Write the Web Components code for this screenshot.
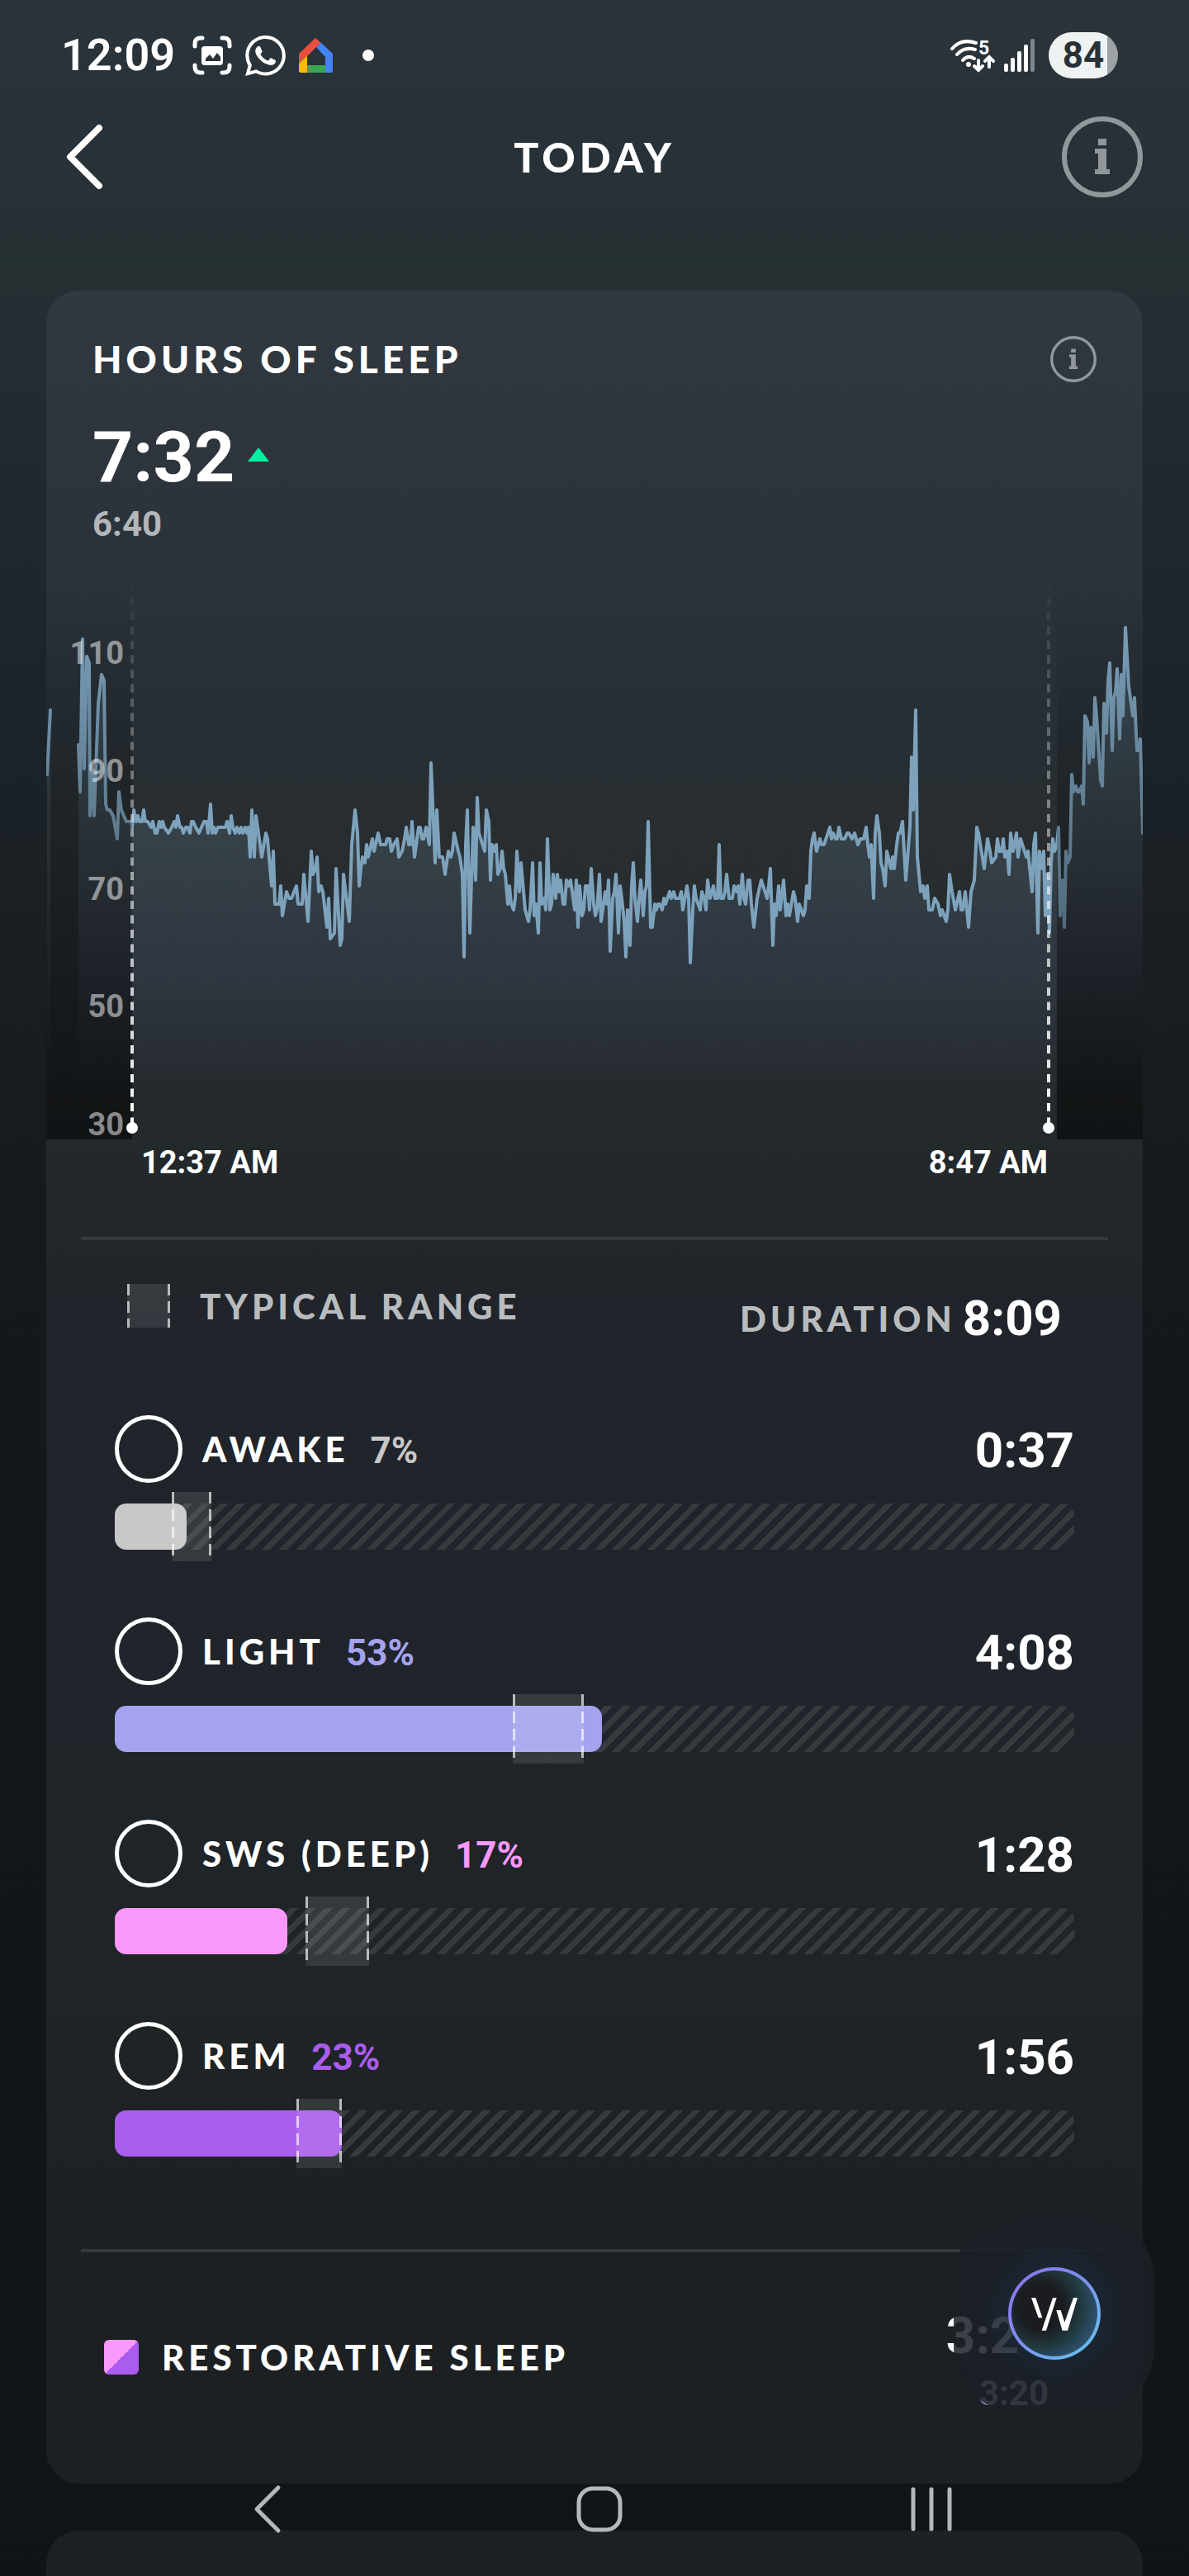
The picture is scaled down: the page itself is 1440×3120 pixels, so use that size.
<!DOCTYPE html>
<html lang="en">
<head>
<meta charset="utf-8">
<meta name="viewport" content="width=device-width, initial-scale=1">
<title>Hours of sleep</title>
<style>
	:root {
		--text-font: Lato, "Open Sans", sans-serif;
		--number-font: Roboto, "Liberation Sans", sans-serif;
		--white: #ffffff;
		--muted: #b9bcbf;
		--rule: #34393d;
		--light: #a5a3ef;
		--deep: #fb98fb;
		--rem: #aa5cec;
	}
	body {
		margin: 0;
		min-height: 100vh;
		display: flex;
		flex-direction: column;
		color: var(--white);
		font-family: var(--text-font);
		background: linear-gradient(#2b343b 0%, #283137 6%, #253033 10%, #212a30 17%, #1b242b 27%, #1a1f22 36%, #15191c 48%, #13171a 65%, #101416 100%);
	}
</style>
</head>
<body>
	<status-bar></status-bar>
	<page-header>TODAY</page-header>
	<sleep-card>
		<span slot="title">HOURS OF SLEEP</span>
		<span slot="value">7:32</span>
		<span slot="typical">6:40</span>
		<heart-chart></heart-chart>
		<chart-times start="12:37 AM" end="8:47 AM"></chart-times>
		<card-rule></card-rule>
		<stage-legend duration="8:09"></stage-legend>
		<stage-list>
			<sleep-stage name="AWAKE" percent="7%" time="0:37" fill="7.5" from="5.9" span="4.2" style="--stage: #c8c8c8"></sleep-stage>
			<sleep-stage name="LIGHT" percent="53%" time="4:08" fill="50.8" from="41.5" span="7.4" style="--stage: var(--light)"></sleep-stage>
			<sleep-stage name="SWS (DEEP)" percent="17%" time="1:28" fill="18" from="19.9" span="6.6" style="--stage: var(--deep)"></sleep-stage>
			<sleep-stage name="REM" percent="23%" time="1:56" fill="23.7" from="18.9" span="4.8" style="--stage: var(--rem)"></sleep-stage>
		</stage-list>
		<card-rule></card-rule>
		<restorative-row value="3:24" typical="3:20">RESTORATIVE SLEEP</restorative-row>
	</sleep-card>
	<next-card></next-card>
	<coach-button></coach-button>
	<system-nav></system-nav>

<script>
// every element only has to fill its own shadow root
class BaseElement extends HTMLElement {
	constructor () {
		super();
		this._shadowRoot = this.attachShadow({ mode: 'open' });
	}

	connectedCallback () {
		this._shadowRoot.innerHTML = this.render();
	}

	attr (name) {
		return this.getAttribute(name);
	}
}

class StatusBar extends BaseElement {
	render () {
		return `
			<style>
				:host {
					display: flex;
					align-items: center;
					justify-content: space-between;
					box-sizing: border-box;
					height: 134px;
					padding: 0 86px 0 74px;
					font-family: var(--number-font);
				}
				div {
					display: flex;
					align-items: center;
				}
				svg {
					display: block;
				}
				.time {
					font-size: 54px;
					font-weight: 600;
					line-height: 56px;
					margin-right: 21px;
				}
				.left svg {
					margin-right: 16px;
				}
				.dot {
					width: 14px;
					height: 14px;
					border-radius: 50%;
					background: var(--white);
					margin-left: 20px;
				}
				.right svg {
					margin-right: 10px;
				}
				.battery {
					justify-content: center;
					width: 84px;
					height: 56px;
					border-radius: 28px;
					margin-left: 6px;
					font-size: 44px;
					font-weight: 700;
					color: #2a3238;
					background: linear-gradient(90deg, #eff2f2 84%, #9da2a5 84%);
				}
			</style>
			<div class="left">
				<span class="time">12:09</span>
				<svg width="48" height="48" fill="none" stroke="#fff" stroke-width="5" stroke-linecap="round">
					<path d="M3 13V10Q3 3 10 3H12M36 3H38Q45 3 45 10V13M45 36V38Q45 45 38 45H36M12 45H10Q3 45 3 38V36"/>
					<rect x="11" y="13" width="26" height="23" rx="4" fill="#fff" stroke="none"/>
					<path d="M16 31V28L21 23L25 28L30 21L34 26V31Z" fill="#2a3238" stroke="none"/>
				</svg>
				<svg width="49" height="49" viewBox="2 2 20 20" fill="#fff">
					<path d="M12.04 2C6.58 2 2.13 6.45 2.13 11.91c0 1.75.46 3.45 1.32 4.95L2.05 22l5.25-1.38c1.45.79 3.08 1.21 4.74 1.21 5.46 0 9.91-4.45 9.91-9.91 0-2.65-1.03-5.14-2.9-7.01A9.816 9.816 0 0 0 12.04 2m.01 1.67c2.2 0 4.26.86 5.82 2.42a8.225 8.225 0 0 1 2.41 5.83c0 4.54-3.7 8.23-8.24 8.23-1.48 0-2.93-.39-4.19-1.15l-.3-.17-3.12.82.83-3.04-.2-.32a8.188 8.188 0 0 1-1.26-4.38c.01-4.54 3.7-8.24 8.25-8.24M8.53 7.33c-.16 0-.43.06-.66.31-.22.25-.87.86-.87 2.07 0 1.22.89 2.39 1 2.56.14.17 1.76 2.67 4.25 3.73.59.27 1.05.42 1.41.53.59.19 1.13.16 1.56.1.48-.07 1.46-.6 1.67-1.18.21-.58.21-1.07.15-1.18-.07-.1-.23-.16-.48-.27-.25-.14-1.47-.74-1.69-.82-.23-.08-.37-.12-.56.12-.16.25-.64.81-.78.97-.15.17-.29.19-.53.07-.26-.13-1.06-.39-2-1.23-.74-.66-1.23-1.47-1.38-1.72-.12-.24-.01-.39.11-.5.11-.11.27-.29.37-.44.13-.14.17-.25.25-.41.08-.17.04-.31-.02-.43-.06-.11-.56-1.35-.77-1.84-.2-.48-.4-.42-.56-.43-.14 0-.3-.01-.47-.01"/>
				</svg>
				<svg width="41" height="42">
					<path d="M20 0L27 6L21 11L10 22V24L0 31V19Z" fill="#ea4e3f"/>
					<path d="M27 6L41 19V40Q41 42 39 42H32V23L21 11Z" fill="#4384f4"/>
					<path d="M0 31L10 22V42H2Q0 42 0 40Z" fill="#fabb08"/>
					<path d="M10 33H32V42H10Z" fill="#37a753"/>
				</svg>
				<span class="dot"></span>
			</div>
			<div class="right">
				<svg width="56" height="42" fill="none" stroke="#fff" stroke-width="4" stroke-linecap="round">
					<path d="M3 13Q14 0 32 6M9 20Q18 10 31 14M16 27Q22 20 30 25"/>
					<circle cx="23" cy="32" r="3" fill="#fff" stroke="none"/>
					<path d="M35 27V38M30 34L35 39L40 34M48 35V24M43 28L48 23L53 28"/>
					<text x="35" y="20" font-size="23" font-weight="700" fill="#fff" stroke="none">5</text>
				</svg>
				<svg width="38" height="42" fill="#fff">
					<rect x="0" y="31" width="5" height="10" rx="2"/>
					<rect x="8" y="24" width="5" height="17" rx="2"/>
					<rect x="16" y="16" width="5" height="25" rx="2"/>
					<rect x="24" y="8" width="5" height="33" rx="2"/>
					<rect x="32" y="1" width="5" height="40" rx="2" fill="#7e868b"/>
				</svg>
				<div class="battery">84</div>
			</div>
		`;
	}
}

class InfoButton extends BaseElement {
	render () {
		return `
			<style>
				:host {
					display: block;
					width: 98px;
					height: 98px;
				}
				:host([small]) {
					width: 56px;
					height: 56px;
				}
				button {
					display: block;
					width: 100%;
					height: 100%;
					padding: 0;
					border: 0;
					background: none;
					cursor: pointer;
				}
				svg {
					display: block;
				}
			</style>
			<button aria-label="Info">
				<svg viewBox="0 0 98 98" width="100%" height="100%">
					<circle cx="49" cy="49" r="46" fill="none" stroke="#91979a" stroke-width="6"/>
					<path d="M44 27h10v8h-10zM40 39h14v25h4v6H40v-6h4V45h-4z" fill="#91979a"/>
				</svg>
			</button>
		`;
	}
}

class PageHeader extends BaseElement {
	render () {
		return `
			<style>
				:host {
					display: grid;
					grid-template-columns: 1fr auto 1fr;
					align-items: center;
					padding: 7px 56px 0;
					margin-bottom: 113px;
				}
				h1 {
					margin: 0;
					font-size: 50px;
					font-weight: 900;
					line-height: 58px;
					letter-spacing: 5px;
				}
				.back {
					justify-self: start;
					width: 72px;
					height: 82px;
					padding: 0 0 0 22px;
					border: 0;
					background: none;
					cursor: pointer;
				}
				svg {
					display: block;
				}
				info-button {
					justify-self: end;
				}
			</style>
			<button class="back" aria-label="Back">
				<svg width="50" height="82" fill="none" stroke="#fff" stroke-width="8" stroke-linecap="round" stroke-linejoin="round">
					<path d="M42 6L7 41L42 76"/>
				</svg>
			</button>
			<h1><slot></slot></h1>
			<info-button></info-button>
		`;
	}
}

class SleepCard extends BaseElement {
	render () {
		return `
			<style>
				:host {
					display: block;
					margin: 0 56px;
					padding: 55px 0 88px;
					border-radius: 40px;
					overflow: hidden;
					background: linear-gradient(#31383f 0%, #2d343b 8%, #2a323a 14%, #272f35 20%, #282d30 25%, #262b2f 34%, #23282b 40%, #212629 44%, #20242b 47%, #1f252a 65%, #1f2426 78%, #1c2023 90%, #1d2023 100%);
				}
				header {
					padding: 0 56px 44px;
				}
				.top {
					display: flex;
					align-items: center;
					justify-content: space-between;
				}
				h2 {
					margin: 0;
					font-size: 46px;
					font-weight: 900;
					line-height: 52px;
					letter-spacing: 5px;
				}
				.value {
					display: flex;
					align-items: center;
					gap: 16px;
					margin-top: 49px;
					font: 700 86px/84px var(--number-font);
				}
				.value svg {
					margin-bottom: 6px;
				}
				.typical {
					margin-top: 18px;
					color: #b4b7ba;
					font: 700 42px/42px var(--number-font);
				}
			</style>
			<header>
				<div class="top">
					<h2><slot name="title"></slot></h2>
					<info-button small></info-button>
				</div>
				<div class="value">
					<slot name="value"></slot>
					<svg width="26" height="18"><path d="M13 0L26 17H0Z" fill="#00f19f"/></svg>
				</div>
				<div class="typical"><slot name="typical"></slot></div>
			</header>
			<slot></slot>
		`;
	}
}

// x,bpm samples, one string for each unbroken part of the line
const HEART_RATE = [
	'1,89 5,100',
	`39,94 41,86 44,112 46,90 49,109 52,108 53,82 56,89 58,82 63,101 67,106 70,105 72,84 74,83 77,83 81,82 86,78 88,86
	91,83 94,82 97,81 103,81 104,80 106,83 109,81 111,82 113,81 116,81 118,83 120,81 123,81 127,80 129,81 132,79 134,79
	137,81 139,80 141,81 143,80 148,79 152,80 155,81 157,80 159,82 162,80 164,80 166,79 169,80 171,80 174,79 176,81 178,81
	181,80 185,79 188,80 191,81 194,81 196,79 199,84 201,79 203,80 205,79 208,80 217,80 219,81 222,79 224,82 226,80 229,79
	231,80 234,79 236,80 238,79 241,80 243,79 245,80 247,75 249,83 252,75 254,82 257,79 261,75 266,79 268,78 273,70 275,76
	277,67 282,67 284,70 286,65 291,69 294,68 297,68 303,70 305,67 310,67 312,72 317,64 321,76 323,72 326,73 328,75 330,69
	333,70 335,69 340,63 342,68 344,61 349,62 351,73 356,60 358,61 360,72 367,64 370,77 374,83 377,79 379,70 381,73 383,75
	386,74 388,77 390,75 395,78 397,76 402,79 405,77 411,77 413,78 416,78 418,76 421,77 425,78 427,75 431,76 434,78 436,80
	439,77 441,77 443,81 446,75 451,80 453,80 455,78 457,78 460,80 464,77 466,91 471,74 473,83 476,75 480,75 483,72 487,76
	490,75 492,76 494,79 499,76 501,75 504,72 506,58 508,77 510,83 513,62 517,80 520,71 522,85 524,79 531,76 533,83 536,81
	538,71 540,77 543,76 545,77 547,72 550,73 552,76 554,73 556,72 559,67 561,70 563,67 566,66 568,68 570,76 573,69 575,74
	580,66 584,64 586,66 589,74 591,65 593,67 596,62 598,74 600,67 603,68 605,66 607,78 610,66 612,67 614,72 617,68 619,72
	621,69 623,71 626,67 628,67 630,71 633,70 635,71 640,66 642,71 644,63 646,70 649,65 651,66 653,70 656,70 658,66 660,73
	663,67 665,65 667,66 670,72 672,64 677,69 679,67 681,71 683,59 686,68 688,69 690,72 693,62 695,70 697,68 700,64 702,58
	704,66 707,60 709,70 711,74 713,68 716,64 718,68 720,71 723,65 725,69 727,70 729,81 732,63 734,63 737,67 739,66 741,67
	743,67 746,66 748,68 750,67 755,69 757,68 760,69 762,68 767,68 769,69 771,66 776,70 778,68 780,57 783,66 785,70 787,68
	792,66 794,69 797,68 799,66 801,71 804,68 808,70 810,68 813,68 815,77 817,68 820,68 822,69 824,72 827,68 831,68 833,70
	836,69 838,70 840,67 843,72 845,68 847,67 850,71 852,71 854,67 857,63 861,68 866,71 873,68 875,70 877,73 880,60 882,67
	884,65 887,70 889,66 893,71 896,65 898,67 900,65 905,69 907,68 910,64 912,67 917,65 919,66 921,70 924,68 926,76 928,78
	930,79 933,76 937,78 939,77 942,77 949,80 951,78 953,79 956,78 958,78 960,80 963,78 967,78 970,79 972,79 976,78 979,79
	983,77 986,78 990,78 993,80 995,77 997,75 999,77 1002,68 1004,79 1006,82 1009,79 1011,74 1013,73 1016,70 1018,76
	1023,73 1025,75 1027,73 1030,77 1032,79 1034,79 1037,81 1041,71 1046,80 1048,92 1050,83 1053,100 1055,75 1059,69
	1062,70 1064,68 1067,70 1069,66 1073,66 1076,68 1080,67 1083,65 1085,66 1090,64 1092,66 1094,72 1097,69 1101,66
	1106,69 1108,66 1110,66 1113,69 1117,63 1120,69 1124,71 1127,80 1129,79 1136,73 1140,78 1143,76 1145,74 1150,75
	1152,78 1154,76 1157,76 1159,78 1161,75 1164,76 1166,72 1168,79 1171,76 1175,79 1177,75 1180,78 1187,75 1189,76
	1194,69 1196,77 1198,79 1201,62 1203,76 1205,73 1208,76 1210,65 1212,72 1215,62 1217,74 1219,78 1221,76 1224,77
	1226,80 1228,65 1231,71 1233,63 1235,76 1237,74 1240,75 1242,89 1244,86 1247,87 1249,86 1251,86 1254,87 1256,84
	1258,99 1261,98 1263,91 1265,97 1268,92 1270,102 1272,99 1277,88 1279,87 1281,101 1284,96 1286,105 1288,108 1291,93
	1293,102 1295,103 1297,107 1300,95 1302,106 1304,99 1307,114 1309,109 1311,104 1316,99 1318,102 1321,93 1323,93
	1325,95 1328,79`
];

class HeartChart extends BaseElement {
	// 80 bpm sits at y 302, each beat is 57/8 high
	y (bpm) {
		return Math.round(302 + (80 - bpm) * 57 / 8);
	}

	points (part) {
		return part.trim().split(/\s+/).map(pair => {
			const [x, bpm] = pair.split(',').map(Number);
			return [x, this.y(bpm)];
		});
	}

	render () {
		const parts = HEART_RATE.map(part => this.points(part));
		const lines = parts.map(p => `<polyline points="${p.join(' ')}"/>`).join('');
		const areas = parts.map(p => `<polygon points="${p[0][0]},680 ${p.join(' ')} ${p[p.length - 1][0]},680"/>`).join('');
		const labels = [110, 90, 70, 50, 30].map((bpm, i) => `<text x="94" y="${104 + Math.round(i * 142.75)}">${bpm}</text>`).join('');
		const markers = [104, 1214].map(x => `
			<path d="M${x} 6V662" stroke="url(#fade)" stroke-width="4" stroke-dasharray="10 7.5"/>
			<circle cx="${x}" cy="666" r="7" fill="#fff"/>
		`).join('');
		return `
			<style>
				:host {
					display: block;
				}
				svg {
					display: block;
					width: 100%;
					height: auto;
					overflow: visible;
				}
				text {
					font: 700 38px var(--number-font);
					fill: rgba(255, 255, 255, 0.5);
					text-anchor: end;
				}
			</style>
			<svg viewBox="0 0 1328 680" role="img" aria-label="Heart rate during sleep">
				<defs>
					<linearGradient id="area" gradientUnits="userSpaceOnUse" x1="0" y1="80" x2="0" y2="620">
						<stop offset="0" stop-color="#7fa6c2" stop-opacity="0.22"/>
						<stop offset="0.5" stop-color="#7fa6c2" stop-opacity="0.15"/>
						<stop offset="0.75" stop-color="#6f93d0" stop-opacity="0.1"/>
						<stop offset="1" stop-color="#6f93d0" stop-opacity="0"/>
					</linearGradient>
					<linearGradient id="shade" x1="0" y1="0" x2="0" y2="1">
						<stop offset="0" stop-color="#000" stop-opacity="0"/>
						<stop offset="1" stop-color="#000" stop-opacity="0.54"/>
					</linearGradient>
					<linearGradient id="fade" gradientUnits="userSpaceOnUse" x1="0" y1="0" x2="0" y2="660">
						<stop offset="0" stop-color="#fff" stop-opacity="0"/>
						<stop offset="0.5" stop-color="#fff" stop-opacity="0.5"/>
						<stop offset="1" stop-color="#fff"/>
					</linearGradient>
				</defs>
				<g fill="url(#area)">${areas}</g>
				<g fill="none" stroke="#7da2bc" stroke-width="4" stroke-linejoin="round" stroke-linecap="round">${lines}</g>
				<rect x="0" y="6" width="104" height="674" fill="url(#shade)"/>
				<rect x="1224" y="6" width="104" height="674" fill="url(#shade)"/>
				${labels}
				${markers}
			</svg>
		`;
	}
}

class ChartTimes extends BaseElement {
	render () {
		return `
			<style>
				:host {
					display: flex;
					justify-content: space-between;
					padding: 6px 115px 0;
					margin-bottom: 68px;
					font: 700 38px/44px var(--number-font);
				}
			</style>
			<span>${this.attr('start')}</span>
			<span>${this.attr('end')}</span>
		`;
	}
}

class CardRule extends BaseElement {
	render () {
		return `
			<style>
				:host {
					display: block;
					height: 4px;
					margin: 0 42px;
					background: var(--rule);
				}
			</style>
		`;
	}
}

// translucent band with a dashed line on both sides
class TypicalRange extends BaseElement {
	render () {
		return `
			<style>
				:host {
					--dash: repeating-linear-gradient(rgba(255, 255, 255, 0.65) 0 14px, transparent 14px 21px);
					display: block;
					background:
						var(--dash) left / 3px 100% no-repeat,
						var(--dash) right / 3px 100% no-repeat,
						rgba(255, 255, 255, 0.1);
				}
			</style>
		`;
	}
}

class StageLegend extends BaseElement {
	render () {
		return `
			<style>
				:host {
					display: flex;
					align-items: flex-start;
					justify-content: space-between;
					padding: 53px 98px 86px;
					color: var(--muted);
					font-size: 42px;
					font-weight: 900;
					letter-spacing: 5px;
				}
				div {
					display: flex;
					align-items: center;
				}
				typical-range {
					width: 52px;
					height: 53px;
					margin-right: 36px;
				}
				.duration {
					gap: 8px;
					margin-top: 12px;
				}
				b {
					color: var(--white);
					letter-spacing: 0;
					font: 700 60px/60px var(--number-font);
				}
			</style>
			<div><typical-range></typical-range>TYPICAL RANGE</div>
			<div class="duration">DURATION <b>${this.attr('duration')}</b></div>
		`;
	}
}

class StageList extends BaseElement {
	render () {
		return `
			<style>
				:host {
					display: grid;
					gap: 81px;
					padding: 0 83px 112px;
				}
			</style>
			<slot></slot>
		`;
	}
}

class SleepStage extends BaseElement {
	render () {
		return `
			<style>
				:host {
					display: block;
				}
				.row {
					display: flex;
					align-items: center;
					height: 83px;
					margin-bottom: 25px;
				}
				label {
					display: flex;
					align-items: center;
					gap: 24px;
					font-size: 42px;
					font-weight: 900;
					letter-spacing: 5px;
				}
				input {
					appearance: none;
					box-sizing: border-box;
					width: 82px;
					height: 82px;
					margin: 0;
					border: 5px solid var(--white);
					border-radius: 50%;
				}
				.percent, .time {
					padding-top: 4px;
				}
				.percent {
					margin-left: 26px;
					color: var(--stage);
					font: 700 44px/44px var(--number-font);
				}
				.time {
					margin-left: auto;
					font: 700 60px/60px var(--number-font);
				}
				.track {
					position: relative;
					height: 56px;
					border-radius: 14px;
					background: repeating-linear-gradient(135deg, #343a3e 0 7px, transparent 7px 15px);
				}
				.fill {
					width: ${this.attr('fill')}%;
					height: 100%;
					border-radius: 14px;
					background: var(--stage);
				}
				typical-range {
					position: absolute;
					top: -14px;
					bottom: -14px;
					left: ${this.attr('from')}%;
					width: ${this.attr('span')}%;
				}
			</style>
			<div class="row">
				<label><input type="checkbox">${this.attr('name')}</label>
				<span class="percent">${this.attr('percent')}</span>
				<span class="time">${this.attr('time')}</span>
			</div>
			<div class="track">
				<div class="fill"></div>
				<typical-range></typical-range>
			</div>
		`;
	}
}

class RestorativeRow extends BaseElement {
	render () {
		return `
			<style>
				:host {
					display: flex;
					align-items: flex-start;
					justify-content: space-between;
					padding: 70px 114px 0 70px;
				}
				.name {
					display: flex;
					align-items: center;
					gap: 28px;
					height: 114px;
					font-size: 42px;
					font-weight: 900;
					letter-spacing: 5px;
				}
				i {
					width: 42px;
					height: 42px;
					border-radius: 6px;
					background: linear-gradient(135deg, var(--deep) 50%, var(--rem) 50%);
				}
				.values {
					text-align: right;
					font: 700 62px/62px var(--number-font);
				}
				.typical {
					margin-top: 18px;
					color: #b4b7ba;
					font-size: 42px;
					line-height: 42px;
				}
			</style>
			<div class="name"><i></i><slot></slot></div>
			<div class="values">
				<div>${this.attr('value')}</div>
				<div class="typical">${this.attr('typical')}</div>
			</div>
		`;
	}
}

class NextCard extends BaseElement {
	render () {
		return `
			<style>
				:host {
					display: block;
					flex: 1;
					margin: 57px 56px 0;
					border-radius: 40px 40px 0 0;
					background: #1d2123;
				}
			</style>
		`;
	}
}

// floats over the page with a dark glow behind it
class CoachButton extends BaseElement {
	render () {
		return `
			<style>
				:host {
					position: fixed;
					right: 42px;
					bottom: 197px;
					display: grid;
					place-items: center;
					width: 243px;
					height: 243px;
					border-radius: 80px;
					background: radial-gradient(circle, rgba(27, 42, 56, 0.9) 25%, rgba(26, 31, 40, 0.86) 50%, rgba(27, 32, 38, 0.85) 72%);
				}
				button {
					width: 112px;
					height: 112px;
					padding: 0;
					border: 4px solid transparent;
					border-radius: 50%;
					cursor: pointer;
					background:
						radial-gradient(circle at 34% 42%, #1a1c20 30%, #21393f 54%, #34577a 82%) padding-box,
						linear-gradient(135deg, #8d74ee 10%, #7b93f0 50%, #66c2ec 90%) border-box;
				}
				svg {
					display: block;
					margin: -4px;
				}
			</style>
			<button aria-label="Coach">
				<svg width="112" height="112" viewBox="0 0 336 336" fill="#fff">
					<path d="M84 111H100L124 184H110ZM162 111H176L138 230H122ZM175 156H191L205 200L237 111H252L216 230H197Z"/>
				</svg>
			</button>
		`;
	}
}

class SystemNav extends BaseElement {
	render () {
		return `
			<style>
				:host {
					position: fixed;
					left: 0;
					right: 0;
					bottom: 0;
					display: grid;
					grid-template-columns: repeat(3, 1fr);
					height: 160px;
					padding: 0 111px 0 123px;
				}
				button {
					padding: 0;
					border: 0;
					background: none;
					cursor: pointer;
				}
				svg {
					fill: none;
					stroke: #b4b8ba;
					stroke-width: 5;
					stroke-linecap: round;
					stroke-linejoin: round;
				}
			</style>
			<button aria-label="Back"><svg width="60" height="60"><path d="M43 4L17 30L43 56"/></svg></button>
			<button aria-label="Home"><svg width="60" height="60"><rect x="5" y="5" width="50" height="50" rx="17"/></svg></button>
			<button aria-label="Recent apps"><svg width="60" height="60"><path d="M8 6V54M30 6V54M52 6V54"/></svg></button>
		`;
	}
}

window.customElements.define('info-button', InfoButton);
window.customElements.define('status-bar', StatusBar);
window.customElements.define('page-header', PageHeader);
window.customElements.define('sleep-card', SleepCard);
window.customElements.define('heart-chart', HeartChart);
window.customElements.define('chart-times', ChartTimes);
window.customElements.define('card-rule', CardRule);
window.customElements.define('typical-range', TypicalRange);
window.customElements.define('stage-legend', StageLegend);
window.customElements.define('stage-list', StageList);
window.customElements.define('sleep-stage', SleepStage);
window.customElements.define('restorative-row', RestorativeRow);
window.customElements.define('next-card', NextCard);
window.customElements.define('coach-button', CoachButton);
window.customElements.define('system-nav', SystemNav);
</script>
</body>
</html>
